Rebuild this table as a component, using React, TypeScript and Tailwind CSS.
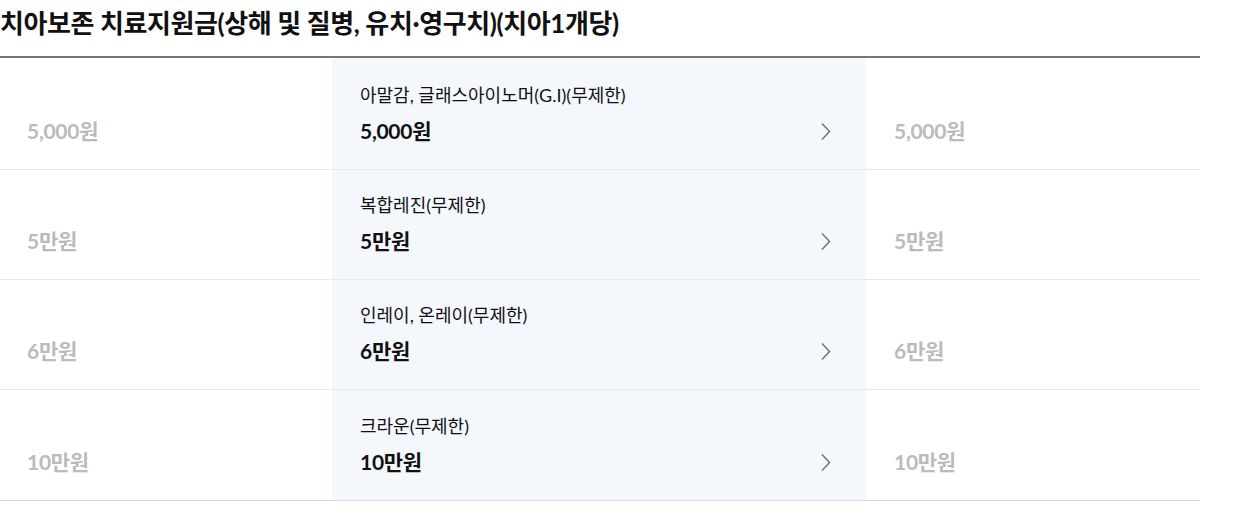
import React from "react";

const rows = [
  { label: "아말감, 글래스아이노머(G.I)(무제한)", amount: "5,000원", h: "h-[112px]" },
  { label: "복합레진(무제한)", amount: "5만원", h: "h-[110px]" },
  { label: "인레이, 온레이(무제한)", amount: "6만원", h: "h-[110px]" },
  { label: "크라운(무제한)", amount: "10만원", h: "h-[111px]" },
];

function Chevron() {
  return (
    <svg width="12" height="19" viewBox="0 0 12 19" fill="none" className="shrink-0">
      <path d="M2 1.5 L9.5 9.5 L2 17.5" stroke="#777777" strokeWidth="1.6" />
    </svg>
  );
}

export default function App() {
  return (
    <div
      className="w-[1238px] h-[524px] bg-white text-[#111]"
      style={{ fontFamily: "Lato, 'Noto Sans CJK KR', sans-serif" }}
    >
      <div className="w-[1200px]">
        <h2 className="h-[56px] pt-[5px] text-[26px] font-bold tracking-[-0.4px] leading-[36px] text-[#111]">
          치아보존 치료지원금(상해 및 질병, 유치·영구치)(치아1개당)
        </h2>
        <div className="border-t-2 border-[#777]">
          {rows.map((r, i) => (
            <div
              key={i}
              className={`grid grid-cols-[332px_534px_334px] ${r.h} border-b ${
                i === rows.length - 1 ? "border-[#dcdcdc]" : "border-[#e8e8e8]"
              }`}
            >
              <div className="flex flex-col justify-end pl-[27px] pb-[25px]">
                <span className="text-[21px] font-bold leading-[26px] tracking-[-0.3px] text-[#bbbbbb]">
                  {r.amount}
                </span>
              </div>
              <div className="bg-[#f4f7fc] flex flex-col justify-end pl-[28px] pr-[34px] pb-[25px]">
                <span className="text-[18px] leading-[24px] text-[#111]">{r.label}</span>
                <div className="mt-[11px] flex items-center justify-between">
                  <span className="text-[21px] font-bold leading-[26px] tracking-[-0.3px] text-[#111]">
                    {r.amount}
                  </span>
                  <Chevron />
                </div>
              </div>
              <div className="flex flex-col justify-end pl-[28px] pb-[25px]">
                <span className="text-[21px] font-bold leading-[26px] tracking-[-0.3px] text-[#bbbbbb]">
                  {r.amount}
                </span>
              </div>
            </div>
          ))}
        </div>
      </div>
    </div>
  );
}
